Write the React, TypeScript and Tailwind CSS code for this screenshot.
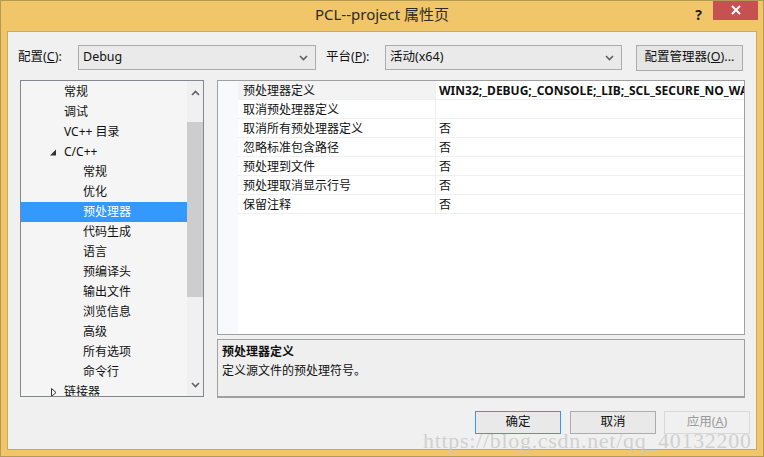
import React from "react";

const font = { fontFamily: '"Noto Sans", "Noto Sans CJK SC", sans-serif' };

const treeItems: { label: string; level: number; arrow?: "open" | "closed"; selected?: boolean }[] = [
  { label: "常规", level: 1 },
  { label: "调试", level: 1 },
  { label: "VC++ 目录", level: 1 },
  { label: "C/C++", level: 1, arrow: "open" },
  { label: "常规", level: 2 },
  { label: "优化", level: 2 },
  { label: "预处理器", level: 2, selected: true },
  { label: "代码生成", level: 2 },
  { label: "语言", level: 2 },
  { label: "预编译头", level: 2 },
  { label: "输出文件", level: 2 },
  { label: "浏览信息", level: 2 },
  { label: "高级", level: 2 },
  { label: "所有选项", level: 2 },
  { label: "命令行", level: 2 },
  { label: "链接器", level: 1, arrow: "closed" },
];

const props: { name: string; value: string; bold?: boolean }[] = [
  { name: "预处理器定义", value: "WIN32;_DEBUG;_CONSOLE;_LIB;_SCL_SECURE_NO_WARNINGS", bold: true },
  { name: "取消预处理器定义", value: "" },
  { name: "取消所有预处理器定义", value: "否" },
  { name: "忽略标准包含路径", value: "否" },
  { name: "预处理到文件", value: "否" },
  { name: "预处理取消显示行号", value: "否" },
  { name: "保留注释", value: "否" },
];

const Chevron = () => (
  <svg width="9" height="6" viewBox="0 0 9 6" className="text-[#606060]">
    <path d="M1 1l3.5 3.5L8 1" stroke="currentColor" strokeWidth="1.6" fill="none" />
  </svg>
);

const Combo = ({ text, width }: { text: string; width: string }) => (
  <div className={`${width} h-[25px] border border-[#acacac] bg-[#eaeaea] flex items-center justify-between pl-[4px] pr-[7px] text-[12.5px] text-[#111]`}>
    <span>{text}</span>
    <Chevron />
  </div>
);

export default function App() {
  return (
    <div className="relative w-[764px] h-[457px] bg-[#f0c668] border border-[#b59a55] flex flex-col overflow-hidden" style={font}>
      {/* title bar */}
      <div className="h-[30px] flex items-center relative shrink-0">
        <div className="absolute inset-x-0 top-[2px] text-center text-[15px] text-[#2b2b2b]">PCL--project 属性页</div>
        <div className="ml-auto flex items-start h-full">
          <span className="mr-[11px] mt-[3px] text-[14px] font-bold text-[#222]">?</span>
          <div className="w-[45px] h-[20px] bg-[#c75050] flex items-center justify-center mr-[5px] -mt-px">
            <svg width="10" height="10" viewBox="0 0 10 10">
              <path d="M1 1l8 8M9 1l-8 8" stroke="white" strokeWidth="2" />
            </svg>
          </div>
        </div>
      </div>

      {/* client */}
      <div className="mx-[6px] mb-[6px] flex-1 bg-[#f0f0f0] border border-[#c9ab60] flex flex-col">
        <div className="flex items-center mt-[13px] h-[25px] text-[12.5px] text-[#111]">
          <span className="ml-[10px] w-[60px]">
            配置(<span className="underline">C</span>):
          </span>
          <Combo text="Debug" width="w-[238px]" />
          <span className="ml-[10px] w-[59px]">
            平台(<span className="underline">P</span>):
          </span>
          <Combo text="活动(x64)" width="w-[237px]" />
          <div className="ml-[14px] w-[107px] h-[26px] border border-[#acacac] bg-[#e5e5e5] flex items-center justify-center">
            配置管理器(<span className="underline">O</span>)...
          </div>
        </div>

        <div className="flex mt-[10px]">
          {/* tree */}
          <div className="ml-[12px] w-[184px] h-[317px] shrink-0 border border-[#828790] bg-[#f5f5f5] flex">
            <div className="flex-1 pt-px overflow-hidden">
              {treeItems.map((it, i) => (
                <div
                  key={i}
                  className={`h-[20px] flex items-center text-[12px] ${it.selected ? "bg-[#3399ff] text-white" : "text-[#111]"}`}
                >
                  <span className="w-[43px] shrink-0 flex justify-end pr-[7px]">
                    {it.arrow === "open" && (
                      <svg width="7" height="7" viewBox="0 0 7 7">
                        <path d="M6 0.5V6.5H0z" fill="#333" />
                      </svg>
                    )}
                    {it.arrow === "closed" && (
                      <svg width="6" height="9" viewBox="0 0 6 9">
                        <path d="M0.5 0.5L5 4.5L0.5 8.5z" fill="none" stroke="#333" />
                      </svg>
                    )}
                  </span>
                  <span className={`whitespace-nowrap ${it.level === 2 ? "ml-[19px]" : ""}`}>{it.label}</span>
                </div>
              ))}
            </div>
            <div className="w-[16px] shrink-0 bg-[#f0f0f0] flex flex-col items-center">
              <div className="h-[24px] flex items-center justify-center">
                <svg width="9" height="6" viewBox="0 0 9 6">
                  <path d="M1 5l3.5-3.5L8 5" stroke="#606060" strokeWidth="1.6" fill="none" />
                </svg>
              </div>
              <div className="w-full h-[175px] mt-[17px] bg-[#cdcdcd]" />
              <div className="mt-auto h-[22px] flex items-center justify-center">
                <Chevron />
              </div>
            </div>
          </div>

          {/* right column */}
          <div className="ml-[13px] w-[528px] shrink-0 flex flex-col">
            <div className="h-[255px] border border-[#a0a0a0] bg-white flex flex-col overflow-hidden">
              <div className="flex flex-1 min-w-0">
                <div className="w-[20px] shrink-0 bg-[#f7f9fd]" />
                <div className="flex-1 min-w-0 flex flex-col">
                  {props.map((p, i) => (
                    <div key={i} className="h-[19px] flex border-b border-[#f0f0f0] text-[12px] text-[#111]">
                      <div className={`w-[198px] shrink-0 pl-[5px] pt-[2px] flex items-center border-r border-[#f0f0f0] ${i === 0 ? "bg-[#f3f3f3]" : ""}`}>
                        {p.name}
                      </div>
                      <div className={`flex-1 min-w-0 pl-[3px] pt-[2px] flex items-center whitespace-nowrap overflow-hidden ${p.bold ? "font-bold" : ""}`}>
                        {p.value}
                      </div>
                    </div>
                  ))}
                </div>
              </div>
            </div>
            <div className="mt-[4px] h-[59px] border border-[#a0a0a0] border-b-2 border-b-[#a0a0a0] bg-[#efefef] pl-[4px] pt-[2px] text-[12px] text-[#111] leading-[19px]">
              <div className="font-bold">预处理器定义</div>
              <div>定义源文件的预处理符号。</div>
            </div>
          </div>
        </div>

        <div className="flex justify-end mt-[13px] mr-[6px] text-[12.5px]">
          <div className="w-[86px] h-[23px] border border-[#3399ff] bg-[#e9e9e9] flex items-center justify-center text-[#111]">确定</div>
          <div className="ml-[9px] w-[86px] h-[23px] border border-[#acacac] bg-[#e9e9e9] flex items-center justify-center text-[#111]">取消</div>
          <div className="ml-[8px] w-[86px] h-[23px] border border-[#d9d9d9] bg-[#f0f0f0] flex items-center justify-center text-[#9a9a9a]">
            应用(<span className="underline">A</span>)
          </div>
        </div>
      </div>

      {/* watermark */}
      <div
        className="absolute left-[422px] top-[423px] text-[22px] text-[#c8c8c8]/80 tracking-[0.7px] pointer-events-none"
        style={{ fontFamily: '"Liberation Serif", serif' }}
      >
        https://blog.csdn.net/qq_40132200
      </div>
    </div>
  );
}
